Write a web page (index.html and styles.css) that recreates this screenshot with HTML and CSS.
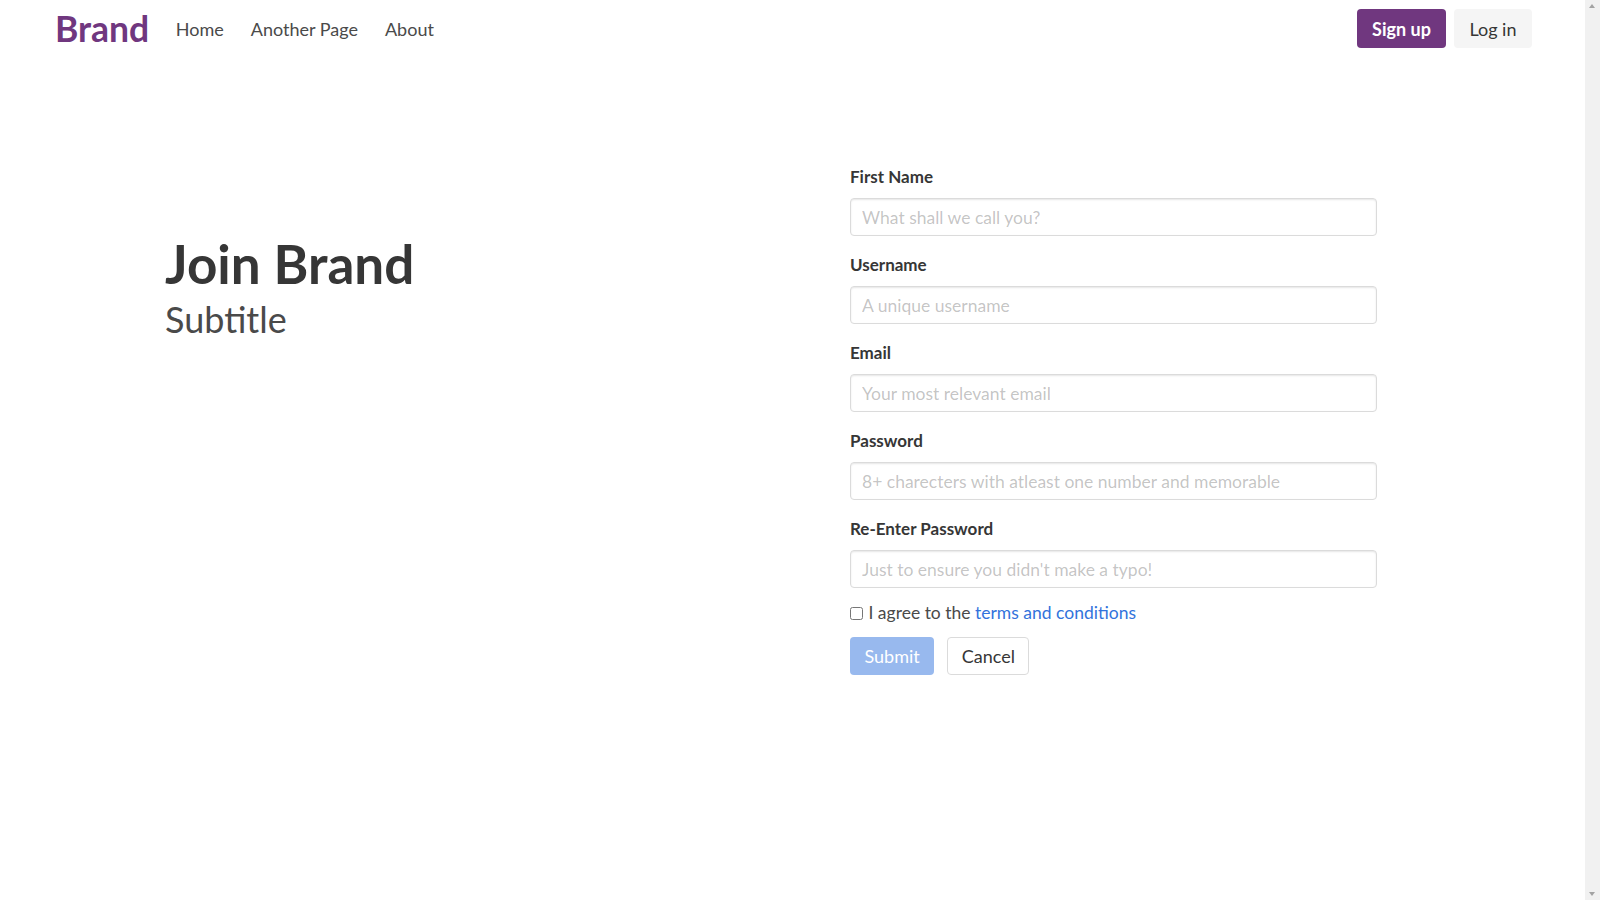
FILE: index.html
```html
<!DOCTYPE html>
<html lang="en">
<head>
<meta charset="utf-8">
<title>Join Brand</title>
<link rel="stylesheet" href="styles.css">
</head>
<body>
<nav class="navbar">
  <div class="navbar-start">
    <a class="brand" href="#">Brand</a>
    <a class="nav-item" href="#">Home</a>
    <a class="nav-item" href="#">Another Page</a>
    <a class="nav-item" href="#">About</a>
  </div>
  <div class="navbar-end">
    <a class="btn btn-primary" href="#">Sign up</a>
    <a class="btn btn-light" href="#">Log in</a>
  </div>
</nav>
<main class="hero">
  <section class="intro">
    <h1 class="title">Join Brand</h1>
    <h2 class="subtitle">Subtitle</h2>
  </section>
  <form class="signup">
    <div class="field">
      <label class="label" for="fn">First Name</label>
      <input class="input" id="fn" type="text" placeholder="What shall we call you?">
    </div>
    <div class="field">
      <label class="label" for="un">Username</label>
      <input class="input" id="un" type="text" placeholder="A unique username">
    </div>
    <div class="field">
      <label class="label" for="em">Email</label>
      <input class="input" id="em" type="email" placeholder="Your most relevant email">
    </div>
    <div class="field">
      <label class="label" for="pw">Password</label>
      <input class="input" id="pw" type="password" placeholder="8+ charecters with atleast one number and memorable">
    </div>
    <div class="field field-last">
      <label class="label" for="pw2">Re-Enter Password</label>
      <input class="input" id="pw2" type="password" placeholder="Just to ensure you didn't make a typo!">
    </div>
    <label class="checkbox"><input type="checkbox" class="check"> I agree to the <a class="link" href="#">terms and conditions</a></label>
    <div class="actions">
      <button class="button button-link" type="submit" disabled>Submit</button>
      <button class="button" type="button">Cancel</button>
    </div>
  </form>
</main>
<div class="scrollbar" aria-hidden="true">
  <span class="arrow arrow-up"></span>
  <span class="arrow arrow-down"></span>
</div>
</body>
</html>
```

FILE: styles.css
```css
body {
  margin: 0;
  padding-right: 15px;
  font-family: Lato, "Liberation Sans", sans-serif;
  color: #4a4a4a;
  background: #fff;
}

.navbar {
  display: flex;
  justify-content: space-between;
  align-items: center;
  height: 57px;
  padding: 0 53px 0 55px;
}

.navbar-start,
.navbar-end {
  display: flex;
  align-items: center;
}

.brand {
  font-size: 35.5px;
  font-weight: 700;
  color: #70377f;
  text-decoration: none;
  margin-right: 13px;
}

.nav-item {
  color: #4a4a4a;
  text-decoration: none;
  font-size: 18px;
  padding: 0 13.5px;
}

.navbar-end {
  gap: 8px;
}

.btn {
  height: 39px;
  display: flex;
  align-items: center;
  padding: 0 15px;
  border-radius: 4px;
  font-size: 18px;
  text-decoration: none;
  box-sizing: border-box;
}

.btn-primary {
  background: #70377f;
  color: #fff;
  font-weight: 700;
}

.btn-light {
  background: #f5f5f5;
  color: #363636;
  padding: 0 15.5px;
}

.hero {
  display: flex;
  padding: 108px 0 0 165px;
}

.intro {
  flex: 0 0 685px;
  margin-top: 69px;
}

.title {
  margin: 0;
  font-size: 53px;
  line-height: 1.125;
  font-weight: 700;
  color: #363636;
}

.subtitle {
  margin: 3px 0 0;
  font-size: 36px;
  line-height: 1.25;
  font-weight: 400;
  color: #4a4a4a;
}

.signup {
  width: 527px;
  display: flex;
  flex-direction: column;
}

.field {
  display: flex;
  flex-direction: column;
  margin-bottom: 17px;
}

.field-last {
  margin-bottom: 13px;
}

.label {
  font-size: 17px;
  line-height: 24px;
  font-weight: 700;
  color: #363636;
  margin-bottom: 9px;
}

.input {
  box-sizing: border-box;
  width: 100%;
  height: 38px;
  margin: 0;
  padding: 0 11px;
  border: 1px solid #dbdbdb;
  border-radius: 4px;
  box-shadow: inset 0 1px 2px rgba(10, 10, 10, 0.1);
  font-family: inherit;
  font-size: 17.5px;
  color: #363636;
  background: #fff;
}

.input::placeholder {
  color: rgba(54, 54, 54, 0.3);
}

.checkbox {
  display: flex;
  align-items: center;
  font-size: 17.5px;
  line-height: 24px;
  color: #4a4a4a;
  white-space: pre;
}

.check {
  width: 13px;
  height: 13px;
  margin: 0 1px 0 0;
}

.link {
  color: #3273dc;
  text-decoration: none;
}

.actions {
  display: flex;
  gap: 13px;
  margin-top: 12px;
}

.button {
  box-sizing: border-box;
  height: 38px;
  padding: 0 13.5px;
  border: 1px solid #dbdbdb;
  border-radius: 4px;
  background: #fff;
  color: #363636;
  font-family: inherit;
  font-size: 18px;
  cursor: pointer;
}

.button-link {
  background: #98b9ee;
  border-color: transparent;
  color: #fff;
}

.scrollbar {
  position: fixed;
  top: 0;
  right: 0;
  width: 15px;
  height: 100vh;
  background: #f1f1f1;
}

.arrow {
  position: absolute;
  left: 4px;
  width: 0;
  height: 0;
  border-left: 3.5px solid transparent;
  border-right: 3.5px solid transparent;
}

.arrow-up {
  top: 4px;
  border-bottom: 4px solid #a3a3a3;
}

.arrow-down {
  bottom: 4px;
  border-top: 4px solid #a3a3a3;
}
```
